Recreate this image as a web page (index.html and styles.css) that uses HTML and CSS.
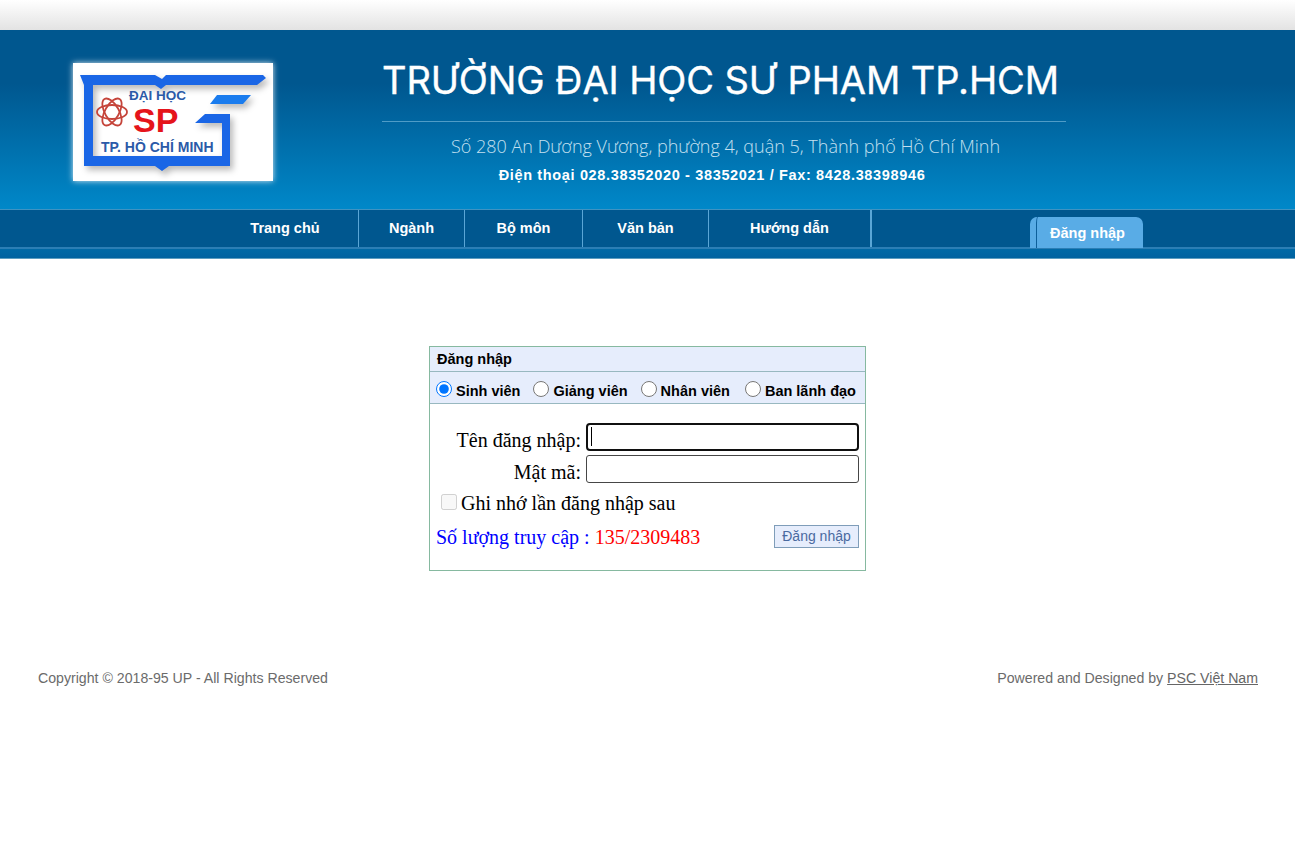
FILE: index.html
```html
<!DOCTYPE html>
<html lang="vi">
<head>
<meta charset="utf-8">
<title>Đăng nhập</title>
<link rel="stylesheet" href="styles.css">
</head>
<body>
<div class="topstrip"></div>
<header class="banner">
  <div class="logo">
    <svg width="200" height="118" viewBox="0 1 200 118">
      <rect y="1" width="200" height="118" fill="#fff"/>
      <g class="logo-frame">
        <path d="M7 13 L82 13 L89 17 L93 13 L190 13 L193 16 L184 23 L93 23 L88 27 L82 23 L20 23 L20 94 L149 94 L149 61 L122 61 L132 52 L157 52 L157 104 L96 104 L89 109 L82 104 L11 104 L11 23 Z" fill="#1a66e6"/>
        <path d="M144 33 L178 33 L170 42 L137 42 Z" fill="#1a7cee"/>
      </g>
      <g fill="none" stroke="#c5443a" stroke-width="1.8">
        <ellipse cx="39" cy="50" rx="15" ry="7"/>
        <ellipse cx="39" cy="50" rx="15" ry="7" transform="rotate(60 39 50)"/>
        <ellipse cx="39" cy="50" rx="15" ry="7" transform="rotate(120 39 50)"/>
      </g>
      <text class="logo-small" x="56" y="38">ĐẠI HỌC</text>
      <text class="logo-sp" x="60" y="70">SP</text>
      <text class="logo-small logo-wide" x="28" y="90">TP. HỒ CHÍ MINH</text>
    </svg>
  </div>
  <div class="school">
    <h1 class="school-name">TRƯỜNG ĐẠI HỌC SƯ PHẠM TP.HCM</h1>
    <p class="school-address">Số 280 An Dương Vương, phường 4, quận 5, Thành phố Hồ Chí Minh</p>
    <p class="school-phone">Điện thoại 028.38352020 - 38352021 / Fax: 8428.38398946</p>
  </div>
</header>
<nav class="nav">
  <a class="nav-item w1">Trang chủ</a>
  <a class="nav-item w2">Ngành</a>
  <a class="nav-item w3">Bộ môn</a>
  <a class="nav-item w4">Văn bản</a>
  <a class="nav-item w5">Hướng dẫn</a>
  <a class="nav-tab">Đăng nhập</a>
</nav>
<div class="nav-under"></div>
<main class="main">
  <form class="panel">
    <div class="panel-title">Đăng nhập</div>
    <div class="roles">
      <label class="role"><input type="radio" name="role" checked>Sinh viên</label>
      <label class="role"><input type="radio" name="role">Giảng viên</label>
      <label class="role"><input type="radio" name="role">Nhân viên</label>
      <label class="role"><input type="radio" name="role">Ban lãnh đạo</label>
    </div>
    <div class="panel-body">
      <div class="field">
        <label class="field-label" for="user">Tên đăng nhập:</label>
        <span class="input-wrap caret">
          <input class="field-input" id="user" type="text" autofocus>
        </span>
      </div>
      <div class="field">
        <label class="field-label" for="pass">Mật mã:</label>
        <span class="input-wrap">
          <input class="field-input" id="pass" type="password">
        </span>
      </div>
      <label class="remember"><input type="checkbox" disabled>Ghi nhớ lần đăng nhập sau</label>
      <div class="bottom">
        <span class="count">Số lượng truy cập : <span class="count-num">135/2309483</span></span>
        <button class="submit" type="button">Đăng nhập</button>
      </div>
    </div>
  </form>
</main>
<footer class="footer">
  <span>Copyright © 2018-95 UP - All Rights Reserved</span>
  <span>Powered and Designed by <a class="footer-link">PSC Việt Nam</a></span>
</footer>
</body>
</html>
```
FILE: styles.css
```css
html, body { margin: 0; padding: 0; background: #fff; }
body { font-family: "Liberation Sans", Arial, sans-serif; color: #000; }

.topstrip { height: 30px; background: linear-gradient(#fff, #e3e3e3); }

.banner {
  height: 179px;
  box-sizing: border-box;
  display: flex;
  padding: 33px 0 0 73px;
  background: linear-gradient(#00578f 0, #00578f 30%, #0088c9 100%);
}
.logo { width: 200px; height: 118px; box-shadow: 0 0 6px rgba(255,255,255,.85); flex: none; }
.logo svg { display: block; width: 200px; height: 118px; }
.logo-frame { filter: drop-shadow(3px 4px 3px rgba(0,0,0,.28)); }
.logo-small { font: bold 13.5px "Liberation Sans", sans-serif; fill: #2b5aa8; }
.logo-wide { font-size: 14px; }
.logo-sp { font: bold 34px "Liberation Sans", sans-serif; fill: #e5141b; }

.school { margin: -1px 0 0 109px; width: 684px; display: flex; flex-direction: column; }
.school-name {
  margin: 0;
  padding-bottom: 9px;
  height: 50px;
  box-sizing: content-box;
  border-bottom: 1px solid #4f9cc7;
  font: 400 38px/36px "Inter", sans-serif;
  letter-spacing: -.1px;
  -webkit-text-stroke: .35px #fff;
  color: #fff;
  white-space: nowrap;
}
.school-address {
  margin: 14px 0 0;
  padding-left: 3px;
  box-sizing: border-box;
  text-align: center;
  font: 300 18px/20px "Open Sans", sans-serif;
  color: #c4e0f0;
  width: 684px;
  white-space: nowrap;
}
.school-phone {
  margin: 10px 0 0;
  padding-right: 24px;
  box-sizing: border-box;
  text-align: center;
  font: bold 14.5px/18px "Liberation Sans", sans-serif;
  color: #fff;
  letter-spacing: .65px;
  white-space: nowrap;
  width: 684px;
}

.nav {
  height: 40px;
  box-sizing: border-box;
  display: flex;
  padding-left: 212px;
  background: #00578f;
  border-top: 1px solid #3f93c2;
  border-bottom: 2px solid #2b7eb5;
}
.nav-item {
  box-sizing: border-box;
  height: 37px;
  border-right: 1px solid #5aa6d6;
  color: #fff;
  font: bold 14.5px/37px "Liberation Sans", sans-serif;
  text-align: center;
}
.w1 { width: 147px; }
.w2 { width: 106px; }
.w3 { width: 118px; }
.w4 { width: 126px; }
.w5 { width: 163px; border-right-width: 2px; }
.nav-tab {
  margin: 7px 0 -1px 158px;
  width: 113px;
  box-sizing: border-box;
  padding-right: 4px;
  border-radius: 7px 7px 0 0;
  background: #59ace6;
  border-left: 6px solid #59ace6;
  box-shadow: inset 1px 0 0 #0d5f9a;
  color: #fff;
  font: bold 14.5px/33px "Liberation Sans", sans-serif;
  text-align: center;
}
.nav-under {
  height: 10px;
  box-sizing: border-box;
  background: linear-gradient(#0069a6, #0062a0);
  border-bottom: 1px solid #5c9dc0;
}

.main { padding-top: 87px; }
.panel {
  width: 437px;
  height: 225px;
  box-sizing: border-box;
  margin: 0 auto;
  border: 1px solid #86b9a0;
}
.panel-title {
  height: 25px;
  box-sizing: border-box;
  padding-left: 7px;
  background: #e6edfc;
  border-bottom: 1px solid #98b8c0;
  font: bold 14.5px/25px "Liberation Sans", sans-serif;
}
.roles {
  height: 32px;
  box-sizing: border-box;
  display: flex;
  gap: 13px;
  padding-left: 6px;
  background: #e6edfc;
  border-bottom: 1px solid #98b8c0;
}
.role {
  display: flex;
  align-items: center;
  gap: 4px;
  padding-top: 8px;
  height: 23px;
  font: bold 14.5px/23px "Liberation Sans", sans-serif;
  white-space: nowrap;
}
.role:last-child { margin-left: 2px; }
.role input { width: 16px; height: 16px; margin: -6px 0 0; flex: none; }

.panel-body { padding: 19px 6px 0; }
.field { display: flex; align-items: center; justify-content: flex-end; gap: 5px; margin-bottom: 4px; height: 28px; }
.field-label { padding-top: 6px; font: 20px/28px "Liberation Serif", serif; white-space: nowrap; }
.input-wrap { position: relative; display: block; height: 28px; }
.caret::after {
  content: "";
  position: absolute;
  left: 5px;
  top: 4px;
  width: 1px;
  height: 19px;
  background: #000;
}
.field-input {
  display: block;
  width: 273px;
  height: 28px;
  box-sizing: border-box;
  padding: 1px 3px;
  border: 1px solid #464646;
  border-radius: 3px;
  font: 16px "Liberation Sans", sans-serif;
  background: #fff;
}
.remember {
  display: flex;
  align-items: center;
  gap: 4px;
  margin: 5px 0 0 5px;
  font: 20px/31px "Liberation Serif", serif;
}
.remember input { width: 16px; height: 16px; margin: -4px 0 0; flex: none; }
.bottom { display: flex; justify-content: space-between; align-items: center; margin-top: 2px; height: 32px; }
.count { font: 20px/32px "Liberation Serif", serif; color: #00f; white-space: nowrap; }
.count-num { color: #f00; }
.submit {
  width: 85px;
  height: 23px;
  margin-top: -2px;
  box-sizing: border-box;
  padding: 0;
  background: #e6edfc;
  border: 1px solid #7f9db9;
  color: #4a6aa0;
  font: 14px/20px "Liberation Sans", sans-serif;
}

.footer {
  display: flex;
  justify-content: space-between;
  padding: 98px 37px 0 38px;
  font: 14.15px/18px "Liberation Sans", sans-serif;
  color: #6b6b6b;
}
.footer-link { color: #666; text-decoration: underline; }
```
